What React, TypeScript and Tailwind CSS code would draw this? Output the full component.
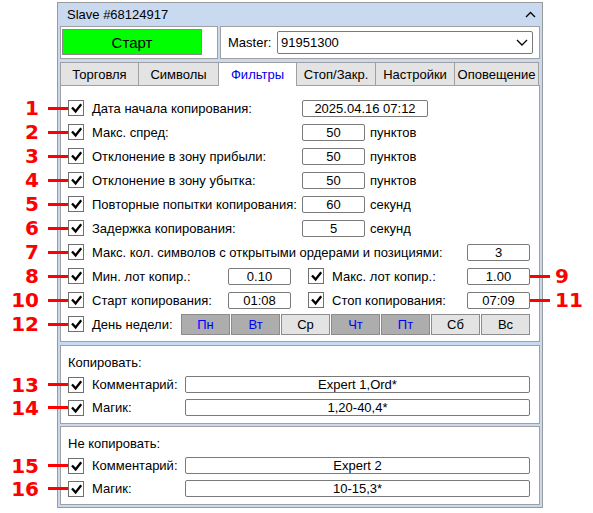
import React from "react";

function Check() {
  return (
    <div className="w-[16px] h-[16px] border border-[#707070] bg-white shrink-0">
      <svg width="14" height="14" viewBox="0 0 14 14" className="block">
        <path d="M3 6.5 L6.6 10.4 L12.2 3.2" fill="none" stroke="#000" strokeWidth="2.3" />
      </svg>
    </div>
  );
}

function NumL({ n }: { n: string }) {
  return (
    <div className="absolute right-full top-1/2 -translate-y-1/2 flex items-center gap-[9px] pointer-events-none">
      <span className="text-[20px] font-bold text-[#ff0000] leading-none font-['DejaVu_Sans',sans-serif]">{n}</span>
      <div className="w-[20px] h-[3px] bg-[#ff0000]" />
    </div>
  );
}

function NumR({ n }: { n: string }) {
  return (
    <div className="absolute left-full top-1/2 -translate-y-1/2 flex items-center gap-[5px] pointer-events-none">
      <div className="w-[20px] h-[3px] bg-[#ff0000]" />
      <span className="text-[20px] font-bold text-[#ff0000] leading-none font-['DejaVu_Sans',sans-serif]">{n}</span>
    </div>
  );
}

function CB({ n }: { n: string }) {
  return (
    <div className="relative">
      <Check />
      <NumL n={n} />
    </div>
  );
}

function Inp({ w, v }: { w: string; v: string }) {
  return (
    <div className={`${w} h-[17px] border border-[#7a7a7a] rounded-[2px] bg-white flex items-center justify-center text-[13px] leading-none shrink-0`}>
      {v}
    </div>
  );
}

function Row({ n, label, value, unit, wide }: { n: string; label: string; value: string; unit?: string; wide?: boolean }) {
  return (
    <div className="h-[24px] flex items-center">
      <CB n={n} />
      <span className="ml-[8px] w-[210px] leading-none">{label}</span>
      <Inp w={wide ? "w-[126px]" : "w-[63px]"} v={value} />
      {unit && <span className="ml-[5px] leading-none">{unit}</span>}
    </div>
  );
}

const days: [string, boolean][] = [
  ["Пн", true],
  ["Вт", true],
  ["Ср", false],
  ["Чт", true],
  ["Пт", true],
  ["Сб", false],
  ["Вс", false],
];

function Section({ title, rows }: { title: string; rows: [string, string, string][] }) {
  return (
    <div className="h-[79px] bg-white border border-[#a0a0a0] pt-[7px] pl-[7px]">
      <div className="h-[18px] flex items-center leading-none">{title}</div>
      <div className="mt-[2px]">
        {rows.map(([n, l, v]) => (
          <div key={n} className="h-[23px] flex items-center">
            <CB n={n} />
            <span className="ml-[8px] w-[93px] leading-none">{l}</span>
            <Inp w="w-[345px]" v={v} />
          </div>
        ))}
      </div>
    </div>
  );
}

export default function App() {
  const tabs = [
    ["Торговля", "w-[79px]"],
    ["Символы", "w-[80px]"],
    ["Фильтры", "w-[78px]"],
    ["Стоп/Закр.", "w-[79px]"],
    ["Настройки", "w-[79px]"],
    ["Оповещение", "w-[84px]"],
  ];
  return (
    <div className="w-[593px] h-[513px] bg-white text-[13px] text-black font-['Liberation_Sans',Arial,sans-serif] overflow-hidden">
      <div className="ml-[57px] mt-[2px] w-[486px] border border-[#9a9a9a] bg-[#c8d9f0]">
        <div className="h-[23px] flex items-center justify-between pl-[9px] pr-[6px]">
          <span className="leading-none">Slave #68124917</span>
          <svg width="11" height="7" viewBox="0 0 11 7">
            <path d="M1 6 L5.5 1.5 L10 6" fill="none" stroke="#000" strokeWidth="1.3" />
          </svg>
        </div>
        <div className="px-[2px] pb-[2px]">
          <div className="flex gap-[2px] h-[33px]">
            <div className="w-[158px] h-full bg-white border border-[#a0a0a0] pl-[1px] pt-[2px]">
              <div className="w-[140px] h-[26px] bg-[#00ff00] border border-[#8a8a8a] flex items-center justify-center text-[15px] leading-none">
                Старт
              </div>
            </div>
            <div className="flex-1 h-full bg-white border border-[#a0a0a0] flex items-center pl-[7px]">
              <span className="w-[49px] leading-none">Master:</span>
              <div className="w-[256px] h-[23px] border border-[#7a7a7a] rounded-[2px] flex items-center justify-between pl-[3px] pr-[4px]">
                <span className="leading-none">91951300</span>
                <svg width="12" height="7" viewBox="0 0 12 7">
                  <path d="M1 1 L6 6 L11 1" fill="none" stroke="#000" strokeWidth="1.3" />
                </svg>
              </div>
            </div>
          </div>

          <div className="mt-[3px] flex h-[23px]">
            {tabs.map(([t, w], i) => (
              <div
                key={t}
                className={`${w} ${i === 0 ? "border-l" : ""} border-t border-r border-[#a0a0a0] flex items-center justify-center leading-none ${
                  i === 2 ? "bg-white text-[#0000ee] h-[24px] relative z-10" : "bg-[#e3e3e3] h-[23px]"
                }`}
              >
                {t}
              </div>
            ))}
          </div>

          <div className="h-[257px] bg-white border border-[#a0a0a0] pt-[10px] pl-[7px]">
            <Row n="1" label="Дата начала копирования:" value="2025.04.16 07:12" wide />
            <Row n="2" label="Макс. спред:" value="50" unit="пунктов" />
            <Row n="3" label="Отклонение в зону прибыли:" value="50" unit="пунктов" />
            <Row n="4" label="Отклонение в зону убытка:" value="50" unit="пунктов" />
            <Row n="5" label="Повторные попытки копирования:" value="60" unit="секунд" />
            <Row n="6" label="Задержка копирования:" value="5" unit="секунд" />
            <div className="h-[24px] flex items-center">
              <CB n="7" />
              <span className="ml-[8px] w-[375px] leading-none">Макс. кол. символов с открытыми ордерами и позициями:</span>
              <Inp w="w-[63px]" v="3" />
            </div>
            <div className="h-[24px] flex items-center">
              <CB n="8" />
              <span className="ml-[8px] w-[136px] leading-none">Мин. лот копир.:</span>
              <Inp w="w-[63px]" v="0.10" />
              <div className="ml-[17px]">
                <Check />
              </div>
              <span className="ml-[8px] w-[135px] leading-none">Макс. лот копир.:</span>
              <div className="relative">
                <Inp w="w-[63px]" v="1.00" />
                <NumR n="9" />
              </div>
            </div>
            <div className="h-[24px] flex items-center">
              <CB n="10" />
              <span className="ml-[8px] w-[136px] leading-none">Старт копирования:</span>
              <Inp w="w-[63px]" v="01:08" />
              <div className="ml-[17px]">
                <Check />
              </div>
              <span className="ml-[8px] w-[135px] leading-none">Стоп копирования:</span>
              <div className="relative">
                <Inp w="w-[63px]" v="07:09" />
                <NumR n="11" />
              </div>
            </div>
            <div className="h-[24px] flex items-center">
              <CB n="12" />
              <span className="ml-[8px] w-[89px] leading-none">День недели:</span>
              <div className="flex gap-[1px]">
                {days.map(([d, on]) => (
                  <div
                    key={d}
                    className={`w-[49px] h-[21px] border border-[#8c8c8c] flex items-center justify-center leading-none ${
                      on ? "bg-[#adadad] text-[#0000ff]" : "bg-[#e3e3e3] text-black"
                    }`}
                  >
                    {d}
                  </div>
                ))}
              </div>
            </div>
          </div>

          <div className="mt-[3px]">
            <Section
              title="Копировать:"
              rows={[
                ["13", "Комментарий:", "Expert 1,Ord*"],
                ["14", "Магик:", "1,20-40,4*"],
              ]}
            />
          </div>
          <div className="mt-[2px]">
            <Section
              title="Не копировать:"
              rows={[
                ["15", "Комментарий:", "Expert 2"],
                ["16", "Магик:", "10-15,3*"],
              ]}
            />
          </div>
        </div>
      </div>
    </div>
  );
}
